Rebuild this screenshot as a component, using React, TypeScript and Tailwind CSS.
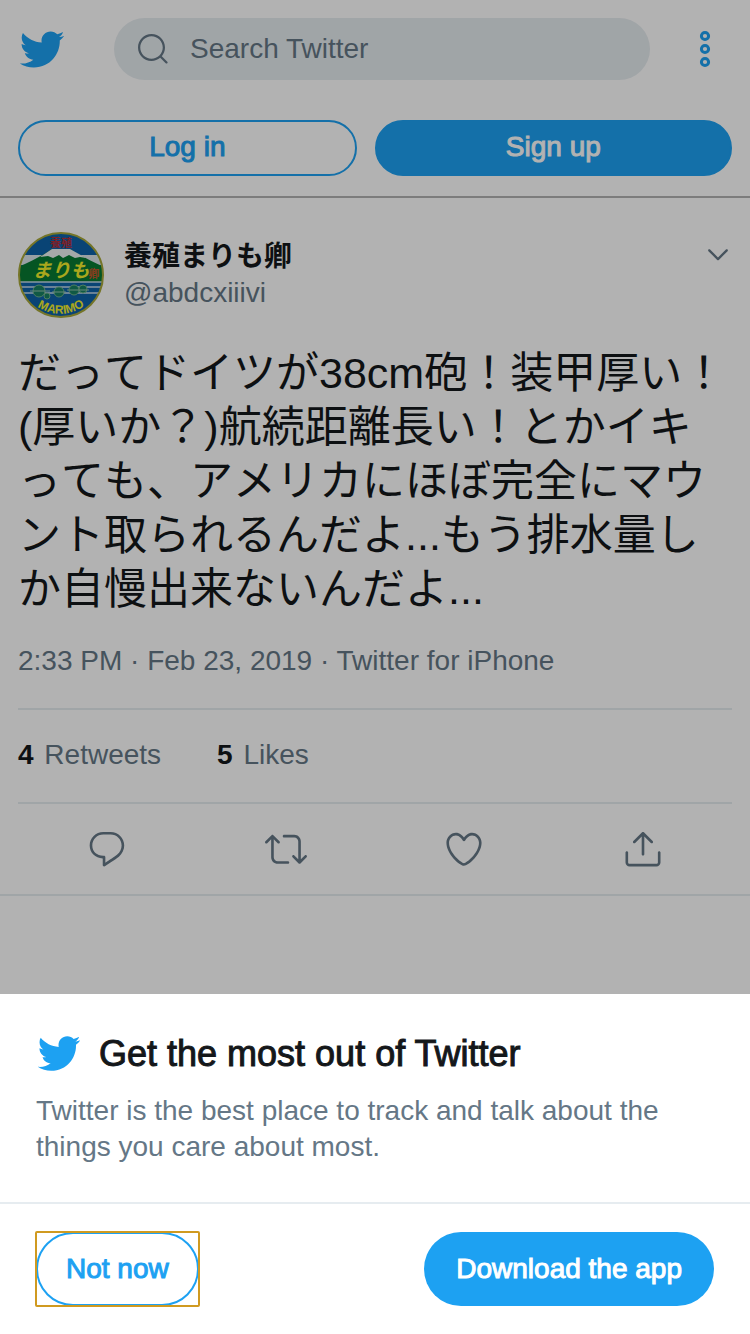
import React from "react";

const BIRD =
  "M23.643 4.937c-.835.37-1.732.62-2.675.733.962-.576 1.7-1.49 2.048-2.578-.9.534-1.897.922-2.958 1.13-.85-.904-2.06-1.47-3.4-1.47-2.572 0-4.658 2.086-4.658 4.66 0 .364.042.718.12 1.06-3.873-.195-7.304-2.05-9.602-4.868-.4.69-.63 1.49-.63 2.342 0 1.616.823 3.043 2.072 3.878-.764-.025-1.482-.234-2.11-.583v.06c0 2.257 1.605 4.14 3.737 4.568-.392.106-.803.162-1.227.162-.3 0-.593-.028-.877-.082.593 1.85 2.313 3.198 4.352 3.234-1.595 1.25-3.604 1.995-5.786 1.995-.376 0-.747-.022-1.112-.065 2.062 1.323 4.51 2.093 7.14 2.093 8.57 0 13.255-7.098 13.255-13.254 0-.2-.005-.402-.014-.602.91-.658 1.7-1.477 2.323-2.41z";
const SEARCH =
  "M21.53 20.47l-3.66-3.66C19.195 15.24 20 13.214 20 11c0-4.97-4.03-9-9-9s-9 4.03-9 9 4.03 9 9 9c2.215 0 4.24-.804 5.808-2.13l3.66 3.66c.147.146.34.22.53.22s.385-.073.53-.22c.295-.293.295-.767.002-1.06zM3.5 11c0-4.135 3.365-7.5 7.5-7.5s7.5 3.365 7.5 7.5-3.365 7.5-7.5 7.5-7.5-3.365-7.5-7.5z";
const CHEVRON =
  "M20.207 8.147c-.39-.39-1.023-.39-1.414 0L12 14.94 5.207 8.147c-.39-.39-1.023-.39-1.414 0-.39.39-.39 1.023 0 1.414l7.5 7.5c.195.196.45.294.707.294s.512-.098.707-.293l7.5-7.5c.39-.39.39-1.022 0-1.413z";

const ACTIONS = [
  {
    label: "Reply",
    path: "M14.046 2.242l-4.148-.01h-.002c-4.374 0-7.8 3.427-7.8 7.802 0 4.098 3.186 7.206 7.465 7.37v3.828c0 .108.044.286.12.403.142.225.384.347.632.347.138 0 .277-.038.402-.118.264-.168 6.473-4.14 8.088-5.506 1.902-1.61 3.04-3.97 3.043-6.312v-.017c-.006-4.367-3.43-7.787-7.8-7.788zm3.787 12.972c-1.134.96-4.862 3.405-6.772 4.643V16.67c0-.414-.335-.75-.75-.75h-.396c-3.66 0-6.318-2.476-6.318-5.886 0-3.534 2.768-6.302 6.3-6.302l4.147.01h.002c3.532 0 6.3 2.766 6.302 6.296-.003 1.91-.942 3.844-2.514 5.176z",
  },
  {
    label: "Retweet",
    path: "M23.77 15.67c-.292-.293-.767-.293-1.06 0l-2.22 2.22V7.65c0-2.068-1.683-3.75-3.75-3.75h-5.85c-.414 0-.75.336-.75.75s.336.75.75.75h5.85c1.24 0 2.25 1.01 2.25 2.25v10.24l-2.22-2.22c-.293-.293-.768-.293-1.06 0s-.294.768 0 1.06l3.5 3.5c.145.147.337.22.53.22s.383-.072.53-.22l3.5-3.5c.294-.292.294-.767 0-1.06zm-10.66 3.28H7.26c-1.24 0-2.25-1.01-2.25-2.25V6.46l2.22 2.22c.148.147.34.22.532.22s.384-.073.53-.22c.293-.293.293-.768 0-1.06l-3.5-3.5c-.293-.294-.768-.294-1.06 0l-3.5 3.5c-.294.292-.294.767 0 1.06s.767.293 1.06 0l2.22-2.22V16.7c0 2.068 1.683 3.75 3.75 3.75h5.85c.414 0 .75-.336.75-.75s-.337-.75-.75-.75z",
  },
  {
    label: "Like",
    path: "M12 21.638h-.014C9.403 21.59 1.95 14.856 1.95 8.478c0-3.064 2.525-5.754 5.403-5.754 2.29 0 3.83 1.58 4.646 2.73.814-1.148 2.354-2.73 4.645-2.73 2.88 0 5.404 2.69 5.404 5.755 0 6.376-7.454 13.11-10.037 13.157H12zM7.354 4.225c-2.08 0-3.903 1.988-3.903 4.255 0 5.74 7.034 11.596 8.55 11.658 1.518-.062 8.55-5.917 8.55-11.658 0-2.267-1.823-4.255-3.903-4.255-2.528 0-3.94 2.936-3.952 2.965-.23.562-1.156.562-1.387 0-.014-.03-1.425-2.965-3.954-2.965z",
  },
  {
    label: "Share",
    path: "M17.53 7.47l-5-5c-.293-.293-.768-.293-1.06 0l-5 5c-.294.293-.294.768 0 1.06s.767.294 1.06 0l3.72-3.72V15c0 .414.336.75.75.75s.75-.336.75-.75V4.81l3.72 3.72c.146.147.338.22.53.22s.384-.072.53-.22c.293-.293.293-.767 0-1.06zM19.708 21.944H4.292C3.028 21.944 2 20.916 2 19.652V14c0-.414.336-.75.75-.75s.75.336.75.75v5.652c0 .437.355.792.792.792h15.416c.437 0 .792-.355.792-.792V14c0-.414.336-.75.75-.75s.75.336.75.75v5.652c0 1.264-1.028 2.292-2.292 2.292z",
  },
];

function Icon({ path, className }: { path: string; className: string }) {
  return (
    <svg viewBox="0 0 24 24" className={className} fill="currentColor" aria-hidden="true">
      <path d={path} />
    </svg>
  );
}

function Avatar() {
  return (
    <svg viewBox="0 0 86 86" className="size-[86px] shrink-0" role="img" aria-label="養殖まりも卿">
      <defs>
        <clipPath id="disc">
          <circle cx="43" cy="43" r="42" />
        </clipPath>
      </defs>
      <g clipPath="url(#disc)">
        <rect width="86" height="86" fill="#0d62a8" />
        <path d="M0 23h86v10H0z" fill="#dce6ea" />
        <path d="M12 23h62v-3H12z" fill="#0d62a8" />
        <path d="M0 35C12 30 22 25 34 17h18c12 8 22 12 34 18v15H0z" fill="#087a33" />
        <path d="M22 25l12-8h18l16 9-6-1-5 1-6-3-6 3-4-3-6 3-5-2z" fill="#eef2f2" />
        <path d="M0 50h86M0 55h86M0 61h86" stroke="#c5d8e8" strokeWidth="1.5" />
        <g fill="#188063" stroke="#70b48a" strokeWidth="1">
          <circle cx="21" cy="59" r="6" />
          <circle cx="29" cy="64" r="3" />
          <circle cx="41" cy="60" r="5" />
          <circle cx="56" cy="58" r="5" />
          <circle cx="65" cy="57" r="4" />
        </g>
        <path d="M12 59h20M34 60h14M49 58h22" stroke="#94c4ae" strokeWidth="1" />
      </g>
      <g fontFamily="'Noto Sans CJK JP', sans-serif" fontWeight="700" textAnchor="middle">
        <text x="43" y="15" fontSize="11" fill="#b0303c">
          養殖
        </text>
        <text x="43" y="45" fontSize="19" fontStyle="italic" fill="#f4f02a">
          まりも
        </text>
        <text x="76" y="46" fontSize="11" fill="#c4552c">
          卿
        </text>
      </g>
      <path id="rim" d="M15 72Q43 92 71 71" fill="none" />
      <text
        fontFamily="'Liberation Sans', sans-serif"
        fontWeight="700"
        fontSize="12"
        fill="#f4f02a"
        textAnchor="middle"
      >
        <textPath href="#rim" startOffset="50%">
          MARIMO
        </textPath>
      </text>
      <circle cx="43" cy="43" r="42" fill="none" stroke="#a8a83a" strokeWidth="2" />
    </svg>
  );
}

export default function App() {
  return (
    <div className="min-h-screen bg-white font-['Liberation_Sans','Noto_Sans_CJK_JP',sans-serif] text-[28px] leading-9 text-[#14171a]">
      <header className="border-b-2 border-[#b2b2b2] px-[18px] pt-[18px] pb-5">
        <div className="flex items-center">
          <a href="#home" aria-label="Twitter" className="text-[#1da1f2]">
            <Icon path={BIRD} className="size-[47px]" />
          </a>
          <label className="ml-[49px] flex h-[62px] min-w-0 flex-1 items-center gap-[19px] rounded-full bg-[#e6ecf0] px-[21px] text-[#657786]">
            <Icon path={SEARCH} className="size-9 shrink-0" />
            <input
              type="search"
              aria-label="Search Twitter"
              placeholder="Search Twitter"
              className="min-w-0 flex-1 bg-transparent outline-none placeholder:text-[#657786] placeholder:opacity-100"
            />
          </label>
          <button type="button" aria-label="More" className="ml-7 flex w-[54px] justify-center">
            <svg viewBox="0 0 12 38" className="h-[38px] w-3" fill="none" stroke="#1da1f2" strokeWidth="3">
              <circle cx="6" cy="6" r="3.6" />
              <circle cx="6" cy="19" r="3.6" />
              <circle cx="6" cy="32" r="3.6" />
            </svg>
          </button>
        </div>
        <div className="mt-10 flex gap-[18px] [-webkit-text-stroke:1px_currentColor]">
          <a
            href="#login"
            className="flex h-14 flex-auto items-center justify-center rounded-full border-2 border-[#1da1f2] pb-0.5 text-[#1da1f2]"
          >
            Log in
          </a>
          <a
            href="#signup"
            className="flex h-14 flex-auto items-center justify-center rounded-full border-2 border-[#1da1f2] bg-[#1da1f2] pb-0.5 text-white"
          >
            Sign up
          </a>
        </div>
      </header>

      <main>
        <article className="border-b-2 border-[#e6ecf0] px-[18px] pt-[34px]">
          <div className="flex items-start">
            <Avatar />
            <div className="ml-5 min-w-0 flex-1 self-center">
              <h1 className="font-bold">養殖まりも卿</h1>
              <p className="text-[#657786]">@abdcxiiivi</p>
            </div>
            <button type="button" aria-label="Tweet options" className="mt-2 text-[#657786]">
              <Icon path={CHEVRON} className="size-7" />
            </button>
          </div>

          <p
            lang="ja"
            className="mt-7 text-[43px] leading-[54px] break-words [font-kerning:none] [line-break:loose]"
          >
            だってドイツが38cm砲！装甲厚い！(厚いか？)航続距離長い！とかイキっても、アメリカにほぼ完全にマウント取られるんだよ...もう排水量しか自慢出来ないんだよ...
          </p>

          <p className="mt-[27px] pb-[29px] text-[#657786]">
            2:33 PM · Feb 23, 2019 · Twitter for iPhone
          </p>

          <div className="flex gap-14 border-y-2 border-[#e6ecf0] pt-[27px] pb-[29px] text-[#657786]">
            <a href="#retweets">
              <strong className="mr-[3px] text-[#14171a]">4</strong> Retweets
            </a>
            <a href="#likes">
              <strong className="mr-[3px] text-[#14171a]">5</strong> Likes
            </a>
          </div>

          <div className="grid grid-cols-4 py-6 text-[#657786]">
            {ACTIONS.map(({ label, path }) => (
              <button key={label} type="button" aria-label={label} className="flex justify-center">
                <Icon path={path} className="size-[42px]" />
              </button>
            ))}
          </div>
        </article>
      </main>

      <div className="fixed inset-0 bg-black/30" />

      <section
        role="dialog"
        aria-labelledby="sheet-title"
        className="fixed inset-x-0 bottom-0 bg-white"
      >
        <div className="border-b-2 border-[#e6ecf0] px-9 py-[37px]">
          <div className="flex items-center gap-[18px]">
            <Icon path={BIRD} className="size-[45px] shrink-0 text-[#1da1f2]" />
            <h2 id="sheet-title" className="text-4xl leading-[45px] [-webkit-text-stroke:1px_currentColor]">
              Get the most out of Twitter
            </h2>
          </div>
          <p className="mt-[17px] text-[#657786]">
            Twitter is the best place to track and talk about the things you care about most.
          </p>
        </div>
        <div className="flex items-center justify-between px-9 py-7 [-webkit-text-stroke:1px_currentColor]">
          <div className="flex rounded-[1px] outline-2 -outline-offset-1 outline-[#d09a20]">
            <button
              type="button"
              className="h-[74px] rounded-full border-2 border-[#1da1f2] px-7 text-[#1da1f2]"
            >
              Not now
            </button>
          </div>
          <a
            href="#download"
            className="flex h-[74px] items-center rounded-full bg-[#1da1f2] px-8 text-white"
          >
            Download the app
          </a>
        </div>
      </section>
    </div>
  );
}
